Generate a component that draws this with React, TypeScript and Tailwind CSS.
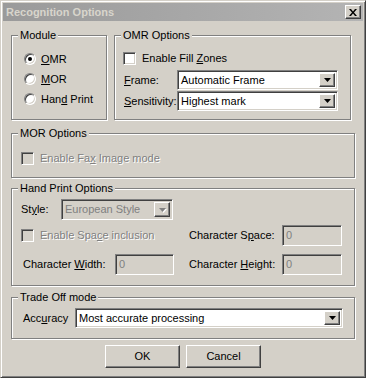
const face = "bg-[#d4d0c8]"
const sunken =
  "border border-t-[#808080] border-l-[#808080] border-r-white border-b-white shadow-[inset_1px_1px_0_#404040,inset_-1px_-1px_0_#d4d0c8]"
const raised =
  "border border-t-white border-l-white border-r-[#404040] border-b-[#404040] shadow-[inset_-1px_-1px_0_#808080]"
const disabledText = "text-[#808080] [text-shadow:1px_1px_0_#fff]"

function Group({ title, className, children }: { title: string; className: string; children?: React.ReactNode }) {
  return (
    <div className={`relative border border-[#808080] shadow-[inset_1px_1px_0_#fff,1px_1px_0_#fff] ${className}`}>
      <span className={`absolute -top-[8px] left-[6px] ${face} px-[2px] leading-[14px]`}>{title}</span>
      {children}
    </div>
  )
}

function Arrow({ disabled }: { disabled?: boolean }) {
  return (
    <svg width="7" height="4" viewBox="0 0 7 4" className={disabled ? "drop-shadow-[1px_1px_0_#fff]" : ""}>
      <polygon points="0,0 7,0 3.5,4" fill={disabled ? "#808080" : "#000"} />
    </svg>
  )
}

function Combo({ value, className, disabled }: { value: string; className: string; disabled?: boolean }) {
  return (
    <div className={`${sunken} ${disabled ? face : "bg-white"} flex items-center p-[2px] ${className}`}>
      <span className={`flex-1 pl-[1px] leading-none ${disabled ? "text-[#808080]" : ""}`}>{value}</span>
      <div className={`${raised} ${face} w-[16px] h-full flex items-center justify-center`}>
        <Arrow disabled={disabled} />
      </div>
    </div>
  )
}

function Check({ label, disabled }: { label: React.ReactNode; disabled?: boolean }) {
  return (
    <div className="flex items-center h-[14px]">
      <div className={`${sunken} w-[13px] h-[13px] ${disabled ? face : "bg-white"}`} />
      <span className={`ml-[6px] ${disabled ? disabledText : ""}`}>{label}</span>
    </div>
  )
}

function Radio({ label, checked }: { label: React.ReactNode; checked?: boolean }) {
  return (
    <div className="flex items-center h-[20px]">
      <div className="w-[12px] h-[12px] rounded-full bg-white border border-t-[#808080] border-l-[#808080] border-r-white border-b-white shadow-[inset_1px_1px_0_#404040,inset_-1px_-1px_0_#d4d0c8] flex items-center justify-center">
        {checked && <div className="w-[4px] h-[4px] rounded-full bg-black" />}
      </div>
      <span className="ml-[5px]">{label}</span>
    </div>
  )
}

function Field({ className }: { className: string }) {
  return (
    <div className={`${sunken} ${face} h-[21px] flex items-center pl-[3px] text-[#808080] ${className}`}>0</div>
  )
}

export default function App() {
  return (
    <div
      className={`w-[366px] h-[378px] ${face} border border-t-[#d4d0c8] border-l-[#d4d0c8] border-r-[#404040] border-b-[#404040] shadow-[inset_1px_1px_0_#fff,inset_-1px_-1px_0_#808080] p-[2px] text-[11px] text-black [font-family:'Liberation_Sans',Arial,sans-serif] select-none`}
    >
      <div className="h-[18px] bg-gradient-to-r from-[#9a9a9a] to-[#b4b4b4] flex items-center pl-[3px] pr-[2px]">
        <span className="flex-1 font-bold text-[#d8d5cc] text-[11px]">Recognition Options</span>
        <div className={`${raised} ${face} w-[16px] h-[14px] flex items-center justify-center`}>
          <svg width="8" height="7" viewBox="0 0 8 7">
            <path d="M0 0h2l2 2.5L6 0h2L5 3.5 8 7H6L4 4.5 2 7H0l3-3.5z" fill="#000" />
          </svg>
        </div>
      </div>

      <div className="px-[8px]">
        <div className="flex mt-[14px] h-[85px]">
          <Group title="Module" className="w-[96px] h-full">
            <div className="flex flex-col pt-[13px] pl-[12px]">
              <Radio checked label={<><u>O</u>MR</>} />
              <Radio label={<><u>M</u>OR</>} />
              <Radio label={<>Han<u>d</u> Print</>} />
            </div>
          </Group>
          <Group title="OMR Options" className="ml-[7px] w-[237px] h-full">
            <div className="flex flex-col pt-[15px] pl-[8px]">
              <Check label={<>Enable Fill <u>Z</u>ones</>} />
              <div className="flex items-center h-[20px] mt-[5px] pl-[1px]">
                <span className="w-[53px]"><u>F</u>rame:</span>
                <Combo value="Automatic Frame" className="w-[161px] h-[20px]" />
              </div>
              <div className="flex items-center h-[20px] mt-[1px] pl-[1px]">
                <span className="w-[53px]"><u>S</u>ensitivity:</span>
                <Combo value="Highest mark" className="w-[161px] h-[20px]" />
              </div>
            </div>
          </Group>
        </div>

        <Group title="MOR Options" className="mt-[13px] h-[45px]">
          <div className="pt-[17px] pl-[9px]">
            <Check disabled label={<>Enable Fa<u>x</u> Image mode</>} />
          </div>
        </Group>

        <Group title="Hand Print Options" className="mt-[10px] h-[98px]">
          <div className="flex flex-col pt-[10px] pl-[9px]">
            <div className="flex items-center h-[21px]">
              <span className="w-[40px]">St<u>y</u>le:</span>
              <Combo disabled value="European Style" className="w-[112px] h-[21px]" />
            </div>
            <div className="flex items-center h-[21px] mt-[5px]">
              <div className="w-[168px]">
                <Check disabled label={<>Enable Spa<u>c</u>e inclusion</>} />
              </div>
              <span className="w-[93px]">Character S<u>p</u>ace:</span>
              <Field className="w-[60px]" />
            </div>
            <div className="flex items-center h-[21px] mt-[8px]">
              <div className="w-[168px] flex items-center pl-[2px]">
                <span className="w-[92px]">Character <u>W</u>idth:</span>
                <Field className="w-[59px]" />
              </div>
              <span className="w-[93px]">Character <u>H</u>eight:</span>
              <Field className="w-[60px]" />
            </div>
          </div>
        </Group>

        <Group title="Trade Off mode" className="mt-[11px] h-[42px]">
          <div className="flex items-center pt-[10px] pl-[11px]">
            <span className="w-[52px]">Acc<u>u</u>racy</span>
            <Combo value="Most accurate processing" className="w-[268px] h-[20px]" />
          </div>
        </Group>

        <div className="flex justify-center gap-[6px] mt-[6px]">
          <button className={`${raised} ${face} w-[75px] h-[23px]`}>OK</button>
          <button className={`${raised} ${face} w-[75px] h-[23px]`}>Cancel</button>
        </div>
      </div>
    </div>
  )
}
